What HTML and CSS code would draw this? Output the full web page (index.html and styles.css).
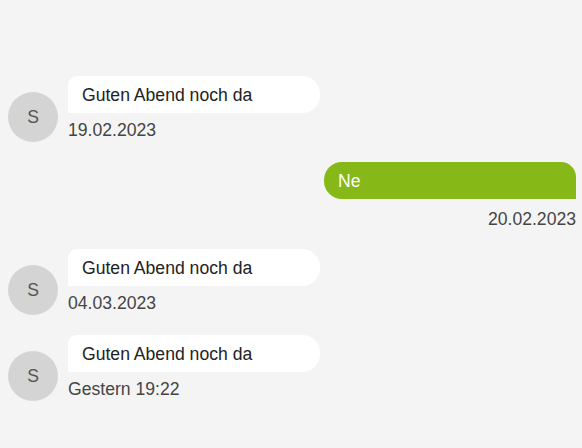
FILE: index.html
```html
<!DOCTYPE html>
<html lang="de">
<head>
<meta charset="utf-8">
<link rel="stylesheet" href="styles.css">
</head>
<body>
<div class="chat">
  <div class="msg received">
    <div class="avatar">S</div>
    <div class="content">
      <div class="bubble">Guten Abend noch da</div>
      <div class="date">19.02.2023</div>
    </div>
  </div>
  <div class="msg sent">
    <div class="content">
      <div class="bubble">Ne</div>
      <div class="date">20.02.2023</div>
    </div>
  </div>
  <div class="msg received">
    <div class="avatar">S</div>
    <div class="content">
      <div class="bubble">Guten Abend noch da</div>
      <div class="date">04.03.2023</div>
    </div>
  </div>
  <div class="msg received">
    <div class="avatar">S</div>
    <div class="content">
      <div class="bubble">Guten Abend noch da</div>
      <div class="date">Gestern 19:22</div>
    </div>
  </div>
</div>
</body>
</html>
```
FILE: styles.css
```css
html, body {
  margin: 0;
  padding: 0;
  background: #f4f4f4;
}
body {
  font-family: "Liberation Sans", Arial, sans-serif;
  font-size: 17.6px;
  width: 582px;
  height: 448px;
  overflow: hidden;
}
.chat {
  display: flex;
  flex-direction: column;
  padding: 76px 6px 0 8px;
}
.msg {
  display: flex;
  align-items: flex-end;
}
.msg.received {
  margin-bottom: 20px;
}
.msg.sent {
  justify-content: flex-end;
  margin-bottom: 20.5px;
}
.avatar {
  width: 50px;
  height: 50px;
  border-radius: 50%;
  background: #d4d4d4;
  color: #555;
  display: flex;
  align-items: center;
  justify-content: center;
  flex-shrink: 0;
  margin-right: 10px;
}
.content {
  display: flex;
  flex-direction: column;
  padding-bottom: 2px;
}
.sent .content {
  align-items: flex-end;
  padding-bottom: 0;
}
.bubble {
  width: 252px;
  box-sizing: border-box;
  padding: 8.5px 14px;
  line-height: 20px;
  background: #fff;
  color: #222;
  border-radius: 9px 18px 18px 0;
}
.sent .bubble {
  background: #86b817;
  color: #fff;
  border-radius: 18px 15px 0 18px;
}
.date {
  margin-top: 7px;
  line-height: 20px;
  color: #444;
}
.sent .date {
  margin-top: 9.5px;
}
```
